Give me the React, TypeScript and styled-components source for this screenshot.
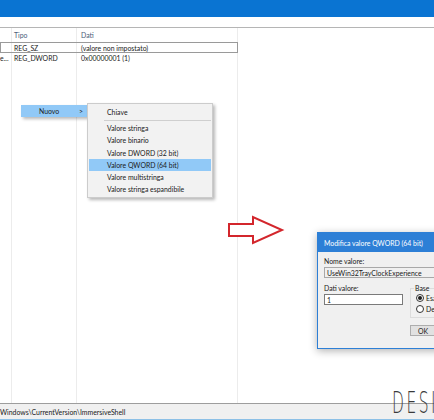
import React from "react";
import styled, { createGlobalStyle } from "styled-components";

const Global = createGlobalStyle`
  html, body { margin: 0; padding: 0; background: #fff; }
  body { font-family: Lato, "Noto Sans", sans-serif; }
  #root { width: 434px; height: 420px; overflow: hidden; }
`;

const Page = styled.div`
  position: relative;
  width: 434px;
  height: 420px;
  display: flex;
  flex-direction: column;
  background: #fff;
  overflow: hidden;
  font-size: 6.9px;
  color: #1a1a1a;
`;

const TitleBar = styled.div`
  height: 17px;
  background: #0a74d2;
  flex: none;
`;

const AddressStrip = styled.div`
  height: 10px;
  border-bottom: 1px solid #b5b5b5;
  flex: none;
`;

const ListView = styled.div`
  flex: 1;
  display: grid;
  grid-template-columns: 12px 65px 161px 1fr;
  grid-template-rows: 15px 10px 10px 1fr;
  position: relative;
`;

const Cell = styled.div<{ $col: number; $row: number; $head?: boolean }>`
  grid-column: ${(p) => p.$col};
  grid-row: ${(p) => p.$row};
  display: flex;
  align-items: center;
  padding-left: ${(p) => (p.$col === 1 ? 0 : p.$col === 2 ? 2 : 4)}px;
  white-space: nowrap;
  overflow: hidden;
  color: ${(p) => (p.$head ? "#4c607a" : "#1a1a1a")};
  line-height: 1;
`;

const ColLine = styled.div<{ $col: number }>`
  grid-column: ${(p) => p.$col};
  grid-row: 1 / -1;
  border-right: 1px solid #ececec;
  pointer-events: none;
`;

const FocusRow = styled.div`
  grid-column: 1 / 4;
  grid-row: 2;
  border: 1px solid #9a9a9a;
  margin-top: -1px;
  pointer-events: none;
`;

const StatusBar = styled.div`
  height: 15px;
  flex: none;
  border-top: 1px solid #9d9d9d;
  border-bottom: 1px solid #8cc0e6;
  background: #f0f0f0;
  display: flex;
  align-items: center;
  white-space: nowrap;
  color: #1a1a1a;
`;

const MenuBox = styled.div<{ $left: number; $top: number; $width: number; $bare?: boolean }>`
  position: absolute;
  left: ${(p) => p.$left}px;
  top: ${(p) => p.$top}px;
  width: ${(p) => p.$width}px;
  background: #f2f2f2;
  border: ${(p) => (p.$bare ? "none" : "1px solid #cccccc")};
  box-shadow: 2px 2px 3px rgba(0, 0, 0, 0.28);
  display: flex;
  flex-direction: column;
  padding: ${(p) => (p.$bare ? "0" : "2px 0")};
`;

const MenuItem = styled.div<{ $active?: boolean }>`
  height: 12.2px;
  display: flex;
  align-items: center;
  padding-left: 18px;
  margin: 0 1px;
  background: ${(p) => (p.$active ? "#91c9f7" : "transparent")};
  color: #1a1a1a;
  white-space: nowrap;
`;

const ParentItem = styled(MenuItem)`
  justify-content: space-between;
  padding-right: 4px;
  margin: 0;
  height: 12px;
`;

const Separator = styled.div`
  height: 1px;
  background: #cfcfcf;
  margin: 2px 1px 1px 16px;
`;

const Dialog = styled.div`
  position: absolute;
  left: 317px;
  top: 232px;
  width: 130px;
  height: 115px;
  background: #f0f0f0;
  border: 1px solid #2d7fd6;
  box-shadow: 0 2px 8px rgba(0, 0, 0, 0.3);
  display: flex;
  flex-direction: column;
`;

const DialogTitle = styled.div`
  height: 19px;
  flex: none;
  background: #2d7fd6;
  color: #fff;
  display: flex;
  align-items: center;
  padding-left: 6px;
  white-space: nowrap;
`;

const DialogBody = styled.div`
  padding: 5px 0 0 6px;
  display: flex;
  flex-direction: column;
`;

const Label = styled.div`
  height: 8px;
  line-height: 8px;
  white-space: nowrap;
  color: #1a1a1a;
`;

const TextBox = styled.div<{ $readOnly?: boolean; $width?: number }>`
  height: 9px;
  width: ${(p) => (p.$width ? `${p.$width}px` : "auto")};
  border: 1px solid ${(p) => (p.$readOnly ? "#a8a8a8" : "#7a7a7a")};
  background: ${(p) => (p.$readOnly ? "#f0f0f0" : "#fff")};
  display: flex;
  align-items: center;
  padding-left: 2px;
  white-space: nowrap;
  overflow: hidden;
  margin-top: 2px;
`;

const Row = styled.div`
  display: flex;
  gap: 7px;
  margin-top: 6px;
`;

const Column = styled.div`
  display: flex;
  flex-direction: column;
`;

const GroupBox = styled.div`
  position: relative;
  margin-top: 4px;
  width: 40px;
  height: 23px;
  border: 1px solid #dcdcdc;
  border-right: none;
  padding: 5px 0 0 5px;
  display: flex;
  flex-direction: column;
  gap: 3px;
`;

const GroupLegend = styled.span`
  position: absolute;
  top: -5px;
  left: 3px;
  background: #f0f0f0;
  padding: 0 1px;
  line-height: 8px;
`;

const RadioRow = styled.div`
  display: flex;
  align-items: center;
  gap: 2px;
  height: 8px;
  white-space: nowrap;
  overflow: hidden;
`;

const Radio = styled.span<{ $checked?: boolean }>`
  flex: none;
  width: 6px;
  height: 6px;
  border-radius: 50%;
  border: 1px solid #333;
  background: #fff;
  display: inline-flex;
  align-items: center;
  justify-content: center;
  &::after {
    content: "";
    width: 4px;
    height: 4px;
    border-radius: 50%;
    background: ${(p) => (p.$checked ? "#1a1a1a" : "transparent")};
  }
`;

const ButtonRow = styled.div`
  display: flex;
  justify-content: flex-end;
  margin-top: 7px;
  padding-left: 86px;
`;

const OkButton = styled.div`
  width: 40px;
  height: 9px;
  border: 1px solid #adadad;
  background: #e1e1e1;
  display: flex;
  align-items: center;
  justify-content: center;
  padding-right: 12px;
`;

const ArrowWrap = styled.svg`
  position: absolute;
  left: 226px;
  top: 214px;
`;

const Watermark = styled.div`
  position: absolute;
  left: 392px;
  top: 387px;
  font-family: "DejaVu Sans", sans-serif;
  font-weight: 200;
  font-size: 31px;
  line-height: 1;
  color: #3a3a3a;
  letter-spacing: 5px;
  transform: scaleX(0.5);
  transform-origin: left top;
  white-space: nowrap;
`;

export default function App() {
  return (
    <>
      <Global />
      <Page>
        <TitleBar />
        <AddressStrip />
        <ListView>
          <ColLine $col={1} />
          <ColLine $col={2} />
          <ColLine $col={3} />
          <Cell $col={2} $row={1} $head>Tipo</Cell>
          <Cell $col={3} $row={1} $head>Dati</Cell>
          <FocusRow />
          <Cell $col={2} $row={2}>REG_SZ</Cell>
          <Cell $col={3} $row={2}>(valore non impostato)</Cell>
          <Cell $col={1} $row={3}>e...</Cell>
          <Cell $col={2} $row={3}>REG_DWORD</Cell>
          <Cell $col={3} $row={3}>0x00000001 (1)</Cell>
        </ListView>
        <StatusBar>Windows\CurrentVersion\ImmersiveShell</StatusBar>

        <MenuBox $left={21} $top={105} $width={66} $bare>
          <ParentItem $active>
            <span>Nuovo</span>
            <span>&gt;</span>
          </ParentItem>
        </MenuBox>

        <MenuBox $left={87} $top={103} $width={124}>
          <MenuItem>Chiave</MenuItem>
          <Separator />
          <MenuItem>Valore stringa</MenuItem>
          <MenuItem>Valore binario</MenuItem>
          <MenuItem>Valore DWORD (32 bit)</MenuItem>
          <MenuItem $active>Valore QWORD (64 bit)</MenuItem>
          <MenuItem>Valore multistringa</MenuItem>
          <MenuItem>Valore stringa espandibile</MenuItem>
        </MenuBox>

        <ArrowWrap width="60" height="32" viewBox="0 0 60 32">
          <polygon
            points="3,10 27,10 27,3 56,16 27,29 27,22 3,22"
            fill="#fff"
            stroke="#d3262c"
            strokeWidth="2"
            strokeLinejoin="miter"
          />
        </ArrowWrap>

        <Dialog>
          <DialogTitle>Modifica valore QWORD (64 bit)</DialogTitle>
          <DialogBody>
            <Label>Nome valore:</Label>
            <TextBox $readOnly>UseWin32TrayClockExperience</TextBox>
            <Row>
              <Column>
                <Label>Dati valore:</Label>
                <TextBox $width={75}>1</TextBox>
              </Column>
              <GroupBox>
                <GroupLegend>Base</GroupLegend>
                <RadioRow>
                  <Radio $checked />
                  <span>Esadecimale</span>
                </RadioRow>
                <RadioRow>
                  <Radio />
                  <span>Decimale</span>
                </RadioRow>
              </GroupBox>
            </Row>
            <ButtonRow>
              <OkButton>OK</OkButton>
            </ButtonRow>
          </DialogBody>
        </Dialog>

        <Watermark>DESI</Watermark>
      </Page>
    </>
  );
}
